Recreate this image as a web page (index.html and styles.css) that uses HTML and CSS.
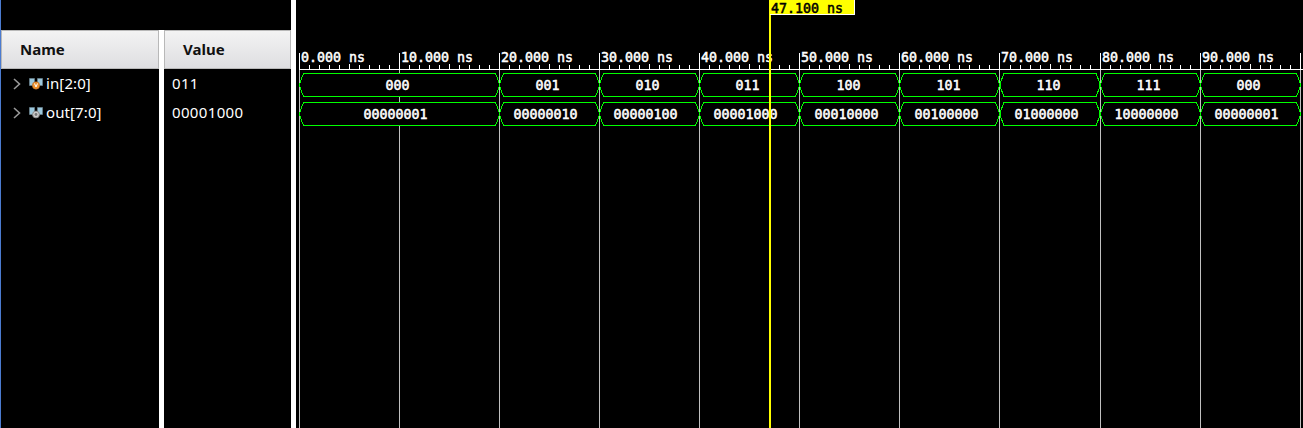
FILE: index.html
```html
<!DOCTYPE html>
<html lang="en">
<head>
<meta charset="utf-8">
<title>Waveform</title>
<link rel="stylesheet" href="styles.css">
</head>
<body>
<main class="viewer">
  <section class="column names">
    <h2 class="heading">Name</h2>
    <div class="signal">
      <svg class="chevron" width="8" height="12" viewBox="0 0 8 12"><path d="M1 1l5.500 5L1 11"/></svg>
      <svg class="bus" width="14" height="12" viewBox="0 0 14 12"><path class="link" d="M4 4h6v3l-1 3H5L3 7z"/><path class="port" d="M.5.500h5v4l-2 3h-3zM13.500.500h-5v4l2 3h3z"/><circle cx="7" cy="7.500" r="3.700" class="input"/><path class="vmark" d="M5.500 5.500L7 9l1.500-3.500"/></svg>
      <span>in[2:0]</span>
    </div>
    <div class="signal">
      <svg class="chevron" width="8" height="12" viewBox="0 0 8 12"><path d="M1 1l5.500 5L1 11"/></svg>
      <svg class="bus" width="14" height="12" viewBox="0 0 14 12"><path class="link" d="M4 4h6v3l-1 3H5L3 7z"/><path class="port" d="M.5.500h5v4l-2 3h-3zM13.500.500h-5v4l2 3h3z"/><circle cx="7" cy="7.500" r="3.400" class="output"/><circle cx="7" cy="7.500" r="1.400" class="dot"/></svg>
      <span>out[7:0]</span>
    </div>
  </section>
  <section class="column values">
    <h2 class="heading">Value</h2>
    <div class="signal">011</div>
    <div class="signal">00001000</div>
  </section>
  <section class="waves">
    <svg class="plot" width="1007" height="428" viewBox="296 0 1007 428">
      <defs>
        <path id="ticks" d="M10.500 65v4m10-4v4m10-4v4m10-4v4m10-5v5m10-4v4m10-4v4m10-4v4m10-4v4"/>
        <path id="wide" d="M0 12L1 8L4 .5H196L199 8L200 12L199 16L196 23.500H4L1 16Z"/>
        <path id="cell" d="M0 12L1 8L4 .5H96L99 8L100 12L99 16L96 23.500H4L1 16Z"/>
      </defs>
      <path class="grid" d="M299.500 70v358M399.500 70v358M499.500 70v358M599.500 70v358M699.500 70v358M799.500 70v358M899.500 70v358M999.500 70v358M1100.500 70v358M1200.500 70v358M1300.500 70v358"/>
      <g class="ruler">
        <path d="M299 69.500H1303M299.500 53v16M399.500 53v16M499.500 53v16M599.500 53v16M699.500 53v16M799.500 53v16M899.500 53v16M999.500 53v16M1100.500 53v16M1200.500 53v16M1300.500 53v16"/>
        <use href="#ticks" x="299"/><use href="#ticks" x="399"/><use href="#ticks" x="499"/><use href="#ticks" x="599"/><use href="#ticks" x="699"/><use href="#ticks" x="799"/><use href="#ticks" x="899"/><use href="#ticks" x="1000"/><use href="#ticks" x="1100"/><use href="#ticks" x="1200"/>
      </g>
      <g class="trace">
        <use href="#wide" x="299.500" y="73"/><use href="#cell" x="499.500" y="73"/><use href="#cell" x="599.500" y="73"/><use href="#cell" x="699.500" y="73"/><use href="#cell" x="799.500" y="73"/><use href="#cell" x="899.500" y="73"/><use href="#cell" x="1000" y="73"/><use href="#cell" x="1100.500" y="73"/><use href="#cell" x="1200.500" y="73"/>
        <use href="#wide" x="299.500" y="102"/><use href="#cell" x="499.500" y="102"/><use href="#cell" x="599.500" y="102"/><use href="#cell" x="699.500" y="102"/><use href="#cell" x="799.500" y="102"/><use href="#cell" x="899.500" y="102"/><use href="#cell" x="1000" y="102"/><use href="#cell" x="1100.500" y="102"/><use href="#cell" x="1200.500" y="102"/>
      </g>
      <g class="label">
        <text x="301" y="62">0.000 ns</text><text x="401" y="62">10.000 ns</text><text x="501" y="62">20.000 ns</text><text x="601" y="62">30.000 ns</text><text x="701" y="62">40.000 ns</text><text x="801" y="62">50.000 ns</text><text x="901" y="62">60.000 ns</text><text x="1001" y="62">70.000 ns</text><text x="1102" y="62">80.000 ns</text><text x="1202" y="62">90.000 ns</text>
        <text x="385.500" y="90">000</text><text x="535.500" y="90">001</text><text x="635.500" y="90">010</text><text x="735.500" y="90">011</text><text x="836.500" y="90">100</text><text x="936.500" y="90">101</text><text x="1036.500" y="90">110</text><text x="1136.500" y="90">111</text><text x="1236.500" y="90">000</text>
        <text x="363.500" y="119">00000001</text><text x="513.500" y="119">00000010</text><text x="613.500" y="119">00000100</text><text x="713.500" y="119">00001000</text><text x="814.500" y="119">00010000</text><text x="914.500" y="119">00100000</text><text x="1014.500" y="119">01000000</text><text x="1114.500" y="119">10000000</text><text x="1214.500" y="119">00000001</text>
      </g>
      <path class="cursor" d="M769 0h2v428h-2z"/>
      <path class="edge" d="M770 0h85v15h-85z"/>
      <path class="cursor" d="M769 0h85v14h-85z"/>
      <text class="time" x="771" y="12.500">47.100 ns</text>
    </svg>
  </section>
</main>
</body>
</html>
```
FILE: styles.css
```css
body {
  margin: 0;
  background: #000;
  overflow: hidden;
}

.viewer {
  box-sizing: border-box;
  display: flex;
  width: 1303px;
  height: 428px;
  border-left: 1px solid #4b7bd0;
}

.column {
  box-sizing: border-box;
  border-right: 5px solid #fff;
  color: #fff;
  font: 15px/29px "Noto Sans", sans-serif;
}

.names {
  width: 163px;
  margin-top: 30px;
}

.values {
  width: 132px;
  padding-top: 30px;
}

.heading {
  box-sizing: border-box;
  height: 39px;
  margin: 0;
  padding-left: 18px;
  border: 1px solid #b8b8b8;
  background: linear-gradient(#f3f3f3, #dedee1);
  color: #111;
  font-size: 15px;
  font-weight: 700;
  line-height: 36px;
}

.signal {
  display: flex;
  align-items: center;
  height: 29px;
  padding-left: 8px;
}

.names .signal {
  padding-left: 12px;
}

.names .signal span {
  letter-spacing: 0.1px;
}

.values .signal {
  letter-spacing: 0.35px;
}

.chevron {
  margin-right: 8px;
  fill: none;
  stroke: #999;
  stroke-width: 1.6;
}

.bus {
  margin-right: 3px;
}

.link {
  fill: #68757d;
}

.port {
  fill: #9bc7dc;
  stroke: #6b8491;
  stroke-width: 0.7;
}

.input {
  fill: #ee922c;
  stroke: #a9622a;
  stroke-width: 0.5;
}

.vmark {
  fill: none;
  stroke: #fff;
}

.output {
  fill: #ccc;
  stroke: #888;
}

.dot {
  fill: #777;
}

.waves {
  flex: 1;
}

.plot {
  display: block;
}

.grid {
  stroke: #c0c0c0;
}

.ruler {
  fill: none;
  stroke: #fff;
}

.trace {
  fill: #000;
  stroke: #0f0;
  shape-rendering: crispEdges;
}

.label,
.time {
  fill: #fff;
  stroke: #fff;
  stroke-width: 0.5;
  font: 400 13.3px "DejaVu Sans Mono", monospace;
  white-space: pre;
}

.cursor {
  fill: #ff0;
}

.edge {
  fill: #fff;
}

.time {
  fill: #000;
  stroke: #000;
}
```
